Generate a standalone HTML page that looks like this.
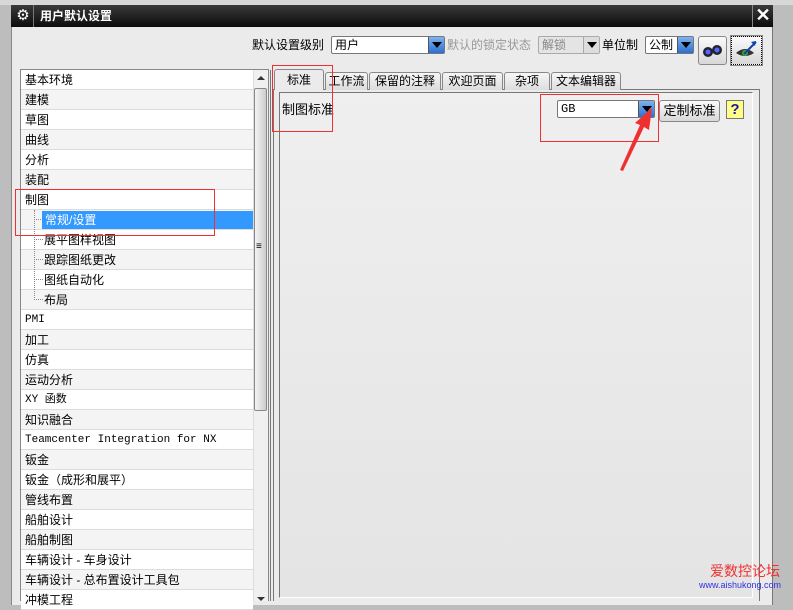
<!DOCTYPE html>
<html><head><meta charset="utf-8"><style>
*{margin:0;padding:0;box-sizing:border-box}
body{width:793px;height:601px;overflow:hidden;background:#bdbdbd;font-family:"Liberation Sans","Noto Sans CJK SC",sans-serif;font-size:12px;color:#000;position:relative}
.abs{position:absolute}
.dlg{left:11px;top:5px;width:762px;height:600px;background:#ebebeb;border-left:1px solid #888;border-right:1px solid #777}
.title{left:11px;top:5px;width:762px;height:22px;background:linear-gradient(#3a3a3a,#0c0c0c)}
.row{position:absolute;left:21px;width:232px;height:20px;border-bottom:1px solid #dcdcdc;line-height:20px;padding-left:4px;font-size:12px;white-space:nowrap}
.row:nth-child(odd){background:#fff}
.row:nth-child(even){background:#f4f4f4}
.mono{font-family:"Liberation Mono","Noto Sans CJK SC",monospace;font-size:11px}
.sub{padding-left:23px}
.dots{position:absolute;left:13px;top:0;width:9px;height:10px;border-bottom:1px dotted #888}
.tab{position:absolute;top:72px;height:18px;border:1px solid #888;border-bottom:none;background:linear-gradient(#f6f6f6,#ddd);font-size:12px;line-height:17px;text-align:center;border-radius:3px 3px 0 0}
.combo{position:absolute;background:#fff;border:1px solid #777;border-radius:2px;height:18px;line-height:16px;padding-left:3px;font-size:12px}
.arr{position:absolute;right:0;top:0;width:16px;height:16px;background:linear-gradient(#7fb3f0,#2c6fd0);border-left:1px solid #555}
.arr:after{content:"";position:absolute;left:3px;top:5px;border-left:5px solid transparent;border-right:5px solid transparent;border-top:6px solid #000}
.red{position:absolute;border:1px solid #f03030}
</style></head><body>
<div class="abs" style="left:0;top:0;width:793px;height:5px;background:#d8d8d8"></div>
<div class="abs dlg"></div>
<div class="abs title"></div>
<div class="abs" style="left:14px;top:7px;width:18px;height:18px;color:#fff;font-size:15px;line-height:18px;text-align:center">⚙</div>
<div class="abs" style="left:33px;top:5px;width:1px;height:22px;background:#777"></div>
<div class="abs" style="left:40px;top:6px;color:#fff;font-size:12px;font-weight:bold;line-height:20px">用户默认设置</div>
<div class="abs" style="left:752px;top:5px;width:1px;height:22px;background:#888"></div>
<div class="abs" style="left:753px;top:4px;width:20px;height:22px;color:#fff;font-size:18px;font-weight:bold;line-height:22px;text-align:center">✕</div>

<div class="abs" style="left:252px;top:37px;line-height:16px">默认设置级别</div>
<div class="combo" style="left:331px;top:36px;width:114px">用户<div class="arr"></div></div>
<div class="abs" style="left:447px;top:37px;color:#999;line-height:16px">默认的锁定状态</div>
<div class="combo" style="left:538px;top:36px;width:62px;background:#e4e4e4;color:#888;border-color:#aaa">解锁<div class="arr" style="background:#ddd;border-left-color:#aaa"></div></div>
<div class="abs" style="left:602px;top:37px;line-height:16px">单位制</div>
<div class="combo" style="left:645px;top:36px;width:49px">公制<div class="arr"></div></div>
<div class="abs" style="left:698px;top:36px;width:29px;height:29px;border:1px solid #888;border-radius:3px;background:linear-gradient(#fafafa,#d8d8d8)"><svg width="27" height="27"><circle cx="9" cy="15" r="5" fill="#223"/><circle cx="18" cy="13" r="5" fill="#223"/><circle cx="9" cy="15" r="2.5" fill="#56f"/><circle cx="18" cy="13" r="2.5" fill="#56f"/></svg></div>
<div class="abs" style="left:731px;top:36px;width:31px;height:29px;border:1px dotted #000;outline:1px solid #888;background:linear-gradient(#fafafa,#d8d8d8)"><svg width="29" height="27"><path d="M4 16 Q13 8 22 16 Q13 22 4 16Z" fill="#333"/><circle cx="13" cy="16" r="3" fill="#3a3"/><path d="M12 17 L24 5" stroke="#14a" stroke-width="2"/><path d="M24 4 l-5 1 4 4z" fill="#14a"/></svg></div>

<div class="abs" style="left:20px;top:69px;width:249px;height:532px;border:1px solid #888;background:#fff"></div>
<div>
<div class="row" style="top:70px">基本环境</div>
<div class="row" style="top:90px">建模</div>
<div class="row" style="top:110px">草图</div>
<div class="row" style="top:130px">曲线</div>
<div class="row" style="top:150px">分析</div>
<div class="row" style="top:170px">装配</div>
<div class="row" style="top:190px">制图</div>
<div class="row sub" style="top:210px"><span class="dots"></span><span style="position:absolute;left:21px;top:1px;width:211px;height:18px;background:#3399ff;color:#fff;line-height:18px;padding-left:3px">常规/设置</span></div>
<div class="row sub" style="top:230px"><span class="dots"></span>展平图样视图</div>
<div class="row sub" style="top:250px"><span class="dots"></span>跟踪图纸更改</div>
<div class="row sub" style="top:270px"><span class="dots"></span>图纸自动化</div>
<div class="row sub" style="top:290px"><span class="dots"></span>布局</div>
<div class="row mono" style="top:310px">PMI</div>
<div class="row" style="top:330px">加工</div>
<div class="row" style="top:350px">仿真</div>
<div class="row" style="top:370px">运动分析</div>
<div class="row mono" style="top:390px">XY 函数</div>
<div class="row" style="top:410px">知识融合</div>
<div class="row mono" style="top:430px">Teamcenter Integration for NX</div>
<div class="row" style="top:450px">钣金</div>
<div class="row" style="top:470px">钣金（成形和展平）</div>
<div class="row" style="top:490px">管线布置</div>
<div class="row" style="top:510px">船舶设计</div>
<div class="row" style="top:530px">船舶制图</div>
<div class="row" style="top:550px">车辆设计 - 车身设计</div>
<div class="row" style="top:570px">车辆设计 - 总布置设计工具包</div>
<div class="row" style="top:590px">冲模工程</div>
</div>
<div class="abs" style="left:34px;top:210px;width:0;height:90px;border-left:1px dotted #888"></div>
<div class="abs" style="left:253px;top:70px;width:15px;height:531px;background:#f0f0f0;border-left:1px solid #ddd"></div>
<div class="abs" style="left:257px;top:76px;border-left:4px solid transparent;border-right:4px solid transparent;border-bottom:4px solid #333"></div>
<div class="abs" style="left:257px;top:597px;border-left:4px solid transparent;border-right:4px solid transparent;border-top:4px solid #333"></div>
<div class="abs" style="left:254px;top:88px;width:13px;height:323px;border:1px solid #888;border-radius:2px;background:linear-gradient(90deg,#f4f4f4,#ccc)"></div>
<div class="abs" style="left:256px;top:243px;font-size:10px;line-height:8px">≡</div>

<div class="abs" style="left:270px;top:70px;width:1px;height:531px;background:#777"></div>
<div class="abs" style="left:273px;top:89px;width:487px;height:512px;border:1px solid #777;border-bottom:none;background:#ebebeb"></div>
<div class="abs" style="left:279px;top:92px;width:474px;height:506px;border-left:1px solid #777;border-top:1px solid #777;border-right:1px solid #fff;border-bottom:1px solid #fff;background:linear-gradient(#efefef,#e4e4e4)"></div>
<div class="tab" style="left:274px;top:69px;height:21px;width:50px;background:#ebebeb;z-index:2;line-height:20px">标准</div>
<div class="tab" style="left:325px;width:43px">工作流</div>
<div class="tab" style="left:369px;width:72px">保留的注释</div>
<div class="tab" style="left:442px;width:61px">欢迎页面</div>
<div class="tab" style="left:504px;width:46px">杂项</div>
<div class="tab" style="left:551px;width:70px">文本编辑器</div>
<div class="abs" style="left:282px;top:99px;font-size:13px">制图标准</div>
<div class="combo mono" style="left:557px;top:100px;width:98px;line-height:16px">GB<div class="arr"></div></div>
<div class="abs" style="left:659px;top:100px;width:61px;height:22px;border:1px solid #888;border-radius:3px;background:linear-gradient(#fafafa,#d8d8d8);text-align:center;line-height:20px;font-size:13px">定制标准</div>
<div class="abs" style="left:726px;top:100px;width:18px;height:19px;background:#ffff88;border:1px solid #777;color:#1a1aa0;font-weight:bold;font-size:15px;text-align:center;line-height:18px">?</div>

<div class="red" style="left:272px;top:65px;width:61px;height:67px"></div>
<div class="red" style="left:15px;top:189px;width:200px;height:47px"></div>
<div class="red" style="left:540px;top:94px;width:119px;height:48px"></div>
<svg class="abs" style="left:615px;top:105px" width="40" height="70"><path d="M5 65 L25 20 L20 18 L37 3 L34 25 L29 22 L8 66Z" fill="#f03030"/></svg>
<div class="abs" style="left:710px;top:563px;color:#f03030;font-size:14px;line-height:16px">爱数控论坛</div>
<div class="abs" style="left:699px;top:580px;color:#3030e0;font-size:9px;line-height:11px">www.aishukong.com</div>
</body></html>
